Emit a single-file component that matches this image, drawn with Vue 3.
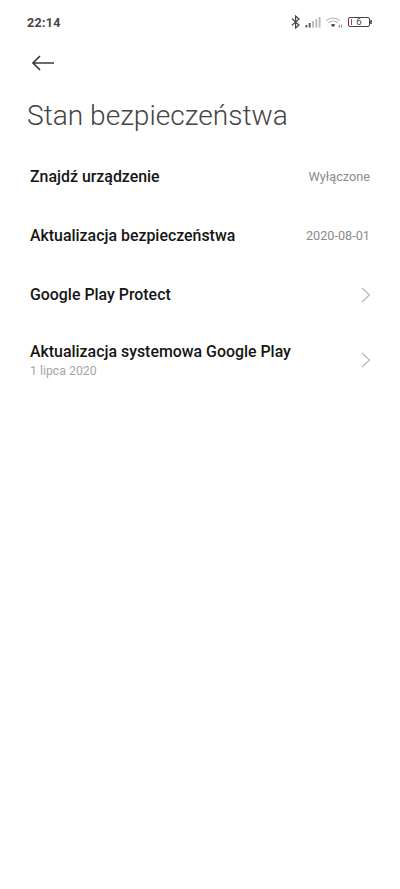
<script setup>
const rows = [
  { title: "Znajdź urządzenie", value: "Wyłączone" },
  { title: "Aktualizacja bezpieczeństwa", value: "2020-08-01" },
  { title: "Google Play Protect", arrow: true },
  { title: "Aktualizacja systemowa Google Play", sub: "1 lipca 2020", arrow: true },
];
</script>

<template>
  <div class="screen">
    <div class="status">
      <span class="time">22:14</span>
      <div class="status-icons">
        <svg width="9" height="14" viewBox="0 0 9 14" fill="none" stroke="#444" stroke-width="1.2">
          <path d="M1 3.8 8 10 4.6 13V1L8 4 1 10.2" />
        </svg>
        <svg width="16" height="12" viewBox="0 0 17 12" preserveAspectRatio="none">
          <rect x="0.5" y="9" width="2" height="2.5" fill="#555" />
          <rect x="4" y="7" width="2" height="4.5" fill="#555" />
          <rect x="7.5" y="5" width="2" height="6.5" fill="#bbb" />
          <rect x="11" y="3" width="2" height="8.5" fill="#bbb" />
          <rect x="14.5" y="1" width="2" height="10.5" fill="#bbb" />
        </svg>
        <svg width="17" height="13" viewBox="0.5 0 18 13" fill="none">
          <path d="M1 4.5C5 .8 11 .8 15 4.5" stroke="#aaa" stroke-width="1.2" />
          <path d="M3.2 6.8C6 4.3 10 4.3 12.8 6.8" stroke="#aaa" stroke-width="1.2" />
          <path d="M5.6 9C7 7.8 9 7.8 10.4 9L8 11.6Z" fill="#444" />
          <path d="M14.5 9v3M17 9v3" stroke="#777" stroke-width="1" />
        </svg>
        <div class="battery">
          <i class="battery-low" />
          <span>6</span>
        </div>
      </div>
    </div>

    <div class="back">
      <svg width="24" height="16" viewBox="0 0 24 16" fill="none" stroke="#3a3a3a" stroke-width="1.7">
        <path d="M23 8H2M9 1 2 8l7 7" />
      </svg>
    </div>

    <h1 class="title">Stan bezpieczeństwa</h1>

    <div class="list">
      <div v-for="row in rows" :key="row.title" class="row" :class="{ 'row-tall': row.sub }">
        <div class="row-text">
          <div class="row-title">{{ row.title }}</div>
          <div v-if="row.sub" class="row-sub">{{ row.sub }}</div>
        </div>
        <span v-if="row.value" class="row-value">{{ row.value }}</span>
        <svg v-if="row.arrow" width="9" height="16" viewBox="0 0 9 16" fill="none" stroke="#b5b5b5" stroke-width="1.2">
          <path d="M1 1l7.5 7L1 15" />
        </svg>
      </div>
    </div>
  </div>
</template>

<style>
html,
body {
  margin: 0;
  background: #fff;
}
</style>

<style scoped>
.screen {
  width: 400px;
  height: 889px;
  background: #fff;
  font-family: Roboto, sans-serif;
  overflow: hidden;
}

.status {
  display: flex;
  justify-content: space-between;
  align-items: center;
  height: 16px;
  padding: 14px 30px 0 27px;
}

.time {
  font-size: 12.5px;
  font-weight: 700;
  color: #444;
  letter-spacing: 0.3px;
}

.status-icons {
  display: flex;
  align-items: center;
  gap: 5px;
}

.battery {
  position: relative;
  width: 20px;
  height: 8px;
  border: 1px solid #444;
  border-radius: 2px;
  font-size: 9.5px;
  line-height: 8px;
  text-align: center;
  color: #444;
}

.battery::after {
  content: "";
  position: absolute;
  right: -3px;
  top: 2px;
  width: 2px;
  height: 4px;
  background: #666;
}

.battery-low {
  position: absolute;
  left: 2px;
  top: 1px;
  width: 1px;
  height: 6px;
  background: #d33;
}

.back {
  padding: 25px 0 0 31px;
  height: 16px;
}

.title {
  margin: 27px 0 0 27px;
  font-size: 28.1px;
  line-height: 36px;
  font-weight: 300;
  color: #444;
}

.list {
  margin-top: 13px;
  padding: 0 30px;
}

.row {
  display: flex;
  align-items: center;
  justify-content: space-between;
  min-height: 59px;
}

.row-tall {
  min-height: 72px;
}

.row-title {
  font-size: 15.9px;
  font-weight: 500;
  line-height: 20px;
  color: #151515;
}

.row-sub {
  margin-top: 2px;
  font-size: 12.3px;
  line-height: 15px;
  color: #a5a5a5;
}

.row-value {
  font-size: 12.7px;
  color: #8a8a8a;
}
</style>
